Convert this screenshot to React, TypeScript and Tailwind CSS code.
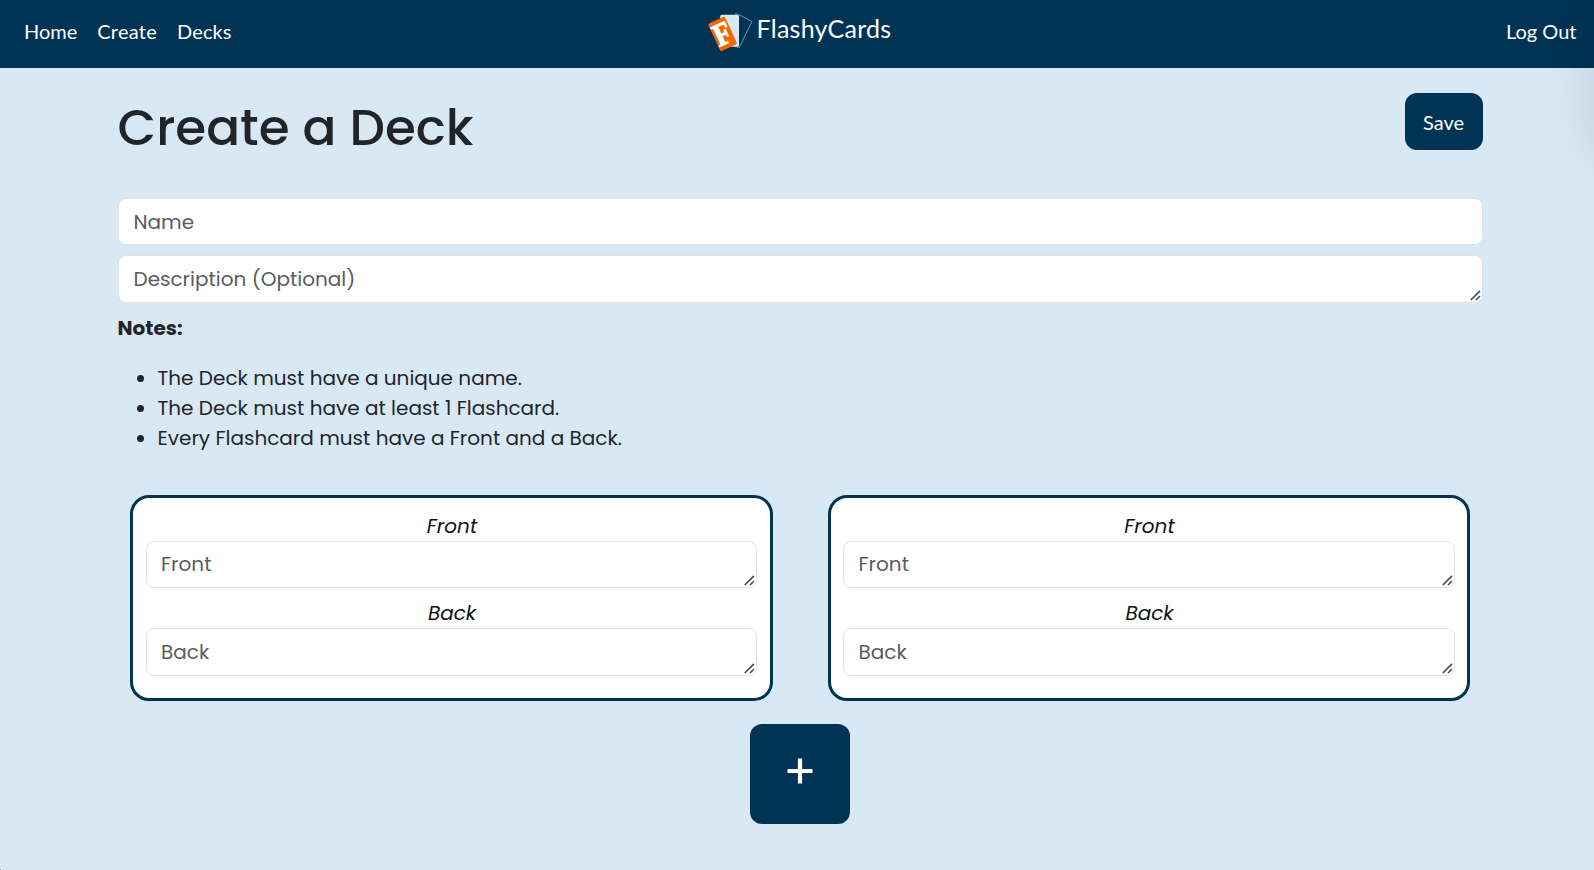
import React from "react";

const NAV_LINKS = [
  { label: "Home", className: "" },
  { label: "Create", className: "tracking-[0.25px]" },
  { label: "Decks", className: "tracking-[0.1px]" },
];

const NOTES = [
  "The Deck must have a unique name.",
  "The Deck must have at least 1 Flashcard.",
  "Every Flashcard must have a Front and a Back.",
];

function Logo() {
  return (
    <svg className="block h-[40px] w-[46px]" viewBox="0 0 46 40" aria-hidden="true">
      <path d="M28 1.9 L30.4 1.9 L45 9.5 L32 36 L27 33.4" fill="none" stroke="#8fa7b8" strokeWidth="0.8" strokeLinejoin="round" />
      <rect x="13.2" y="2.8" width="18.8" height="32" rx="1.6" fill="#d9e8f5" />
      <g transform="translate(15.6 21.9) rotate(-25)">
        <rect x="-9.2" y="-15.2" width="18.4" height="30.4" rx="1.8" fill="#f56600" />
        <text
          x="0"
          y="10.6"
          textAnchor="middle"
          stroke="#fff"
          strokeWidth="1.1"
          transform="scale(0.86 1)"
          className="fill-white font-['Liberation_Serif',serif] text-[32px] font-bold"
        >
          F
        </text>
      </g>
    </svg>
  );
}

function ResizeGrip() {
  return (
    <svg
      className="pointer-events-none absolute right-[2px] bottom-[2px] h-[11px] w-[11px]"
      viewBox="0 0 11 11"
      aria-hidden="true"
    >
      <path d="M0.8 10 L10 0.8 M6 10 L10 6" stroke="#4a4c4e" strokeWidth="1.7" fill="none" />
    </svg>
  );
}

const FIELD =
  "block w-full resize-none overflow-hidden rounded-[8px] border border-[#dee2e6] bg-white pr-[15px] pl-[14.5px] text-[20px] leading-[30px] placeholder:text-[#595c5f] placeholder:opacity-100 outline-none";

function Area({ placeholder, className }: { placeholder: string; className: string }) {
  return (
    <div className="relative">
      <textarea rows={1} placeholder={placeholder} className={`${FIELD} ${className}`} />
      <ResizeGrip />
    </div>
  );
}

function FlashCard() {
  return (
    <div className="h-[206px] w-[642.5px] rounded-[19px] border-3 border-[#003354] bg-white px-[12.5px] pt-[13px]">
      <div className="pl-[1.5px] text-center leading-[30px] text-[#101214] italic">Front</div>
      <Area placeholder="Front" className="h-[47px] pt-[7px]" />
      <div className="mt-[10px] pl-[1.5px] text-center leading-[30px] text-[#101214] italic">Back</div>
      <Area placeholder="Back" className="h-[48px] pt-[8px]" />
    </div>
  );
}

export default function App() {
  return (
    <div className="relative h-[870px] w-full overflow-hidden bg-[#d9e8f5] font-['Poppins',sans-serif] text-[20px] text-[#212529]">
      <nav className="grid h-[68px] grid-cols-[1fr_auto_1fr] items-start bg-[#003354] pr-[18px] pl-[24px] font-['Lato',sans-serif] text-white">
        <div className="flex gap-[20px] pt-[16px] leading-[30px]">
          {NAV_LINKS.map((link) => (
            <a key={link.label} href="#" className={link.className}>
              {link.label}
            </a>
          ))}
        </div>
        <a href="#" className="mr-[2px] flex items-start gap-[4px] pt-[12px] text-[25px] leading-[32px] tracking-[0.25px]">
          <Logo />
          <span>FlashyCards</span>
        </a>
        <a href="#" className="-mr-[0.5px] justify-self-end pt-[16px] leading-[30px]">
          Log Out
        </a>
      </nav>

      <main className="ml-[118px] w-[1365px]">
        <header className="flex h-[130px] items-start justify-between pt-[25px]">
          <h1 className="-ml-[0.5px] pt-[5px] text-[50px] leading-[60px] font-medium">Create a Deck</h1>
          <button className="h-[57px] w-[78px] rounded-[12px] bg-[#003354] pr-[1px] font-['Lato',sans-serif] text-[20px] text-white">
            Save
          </button>
        </header>

        <div className="flex flex-col gap-[10px]">
          <input placeholder="Name" className={`${FIELD} h-[47px] pt-[1px]`} />
          <Area placeholder="Description (Optional)" className="h-[48px] pt-[8px]" />
        </div>

        <p className="mt-[10px] -ml-[0.5px] leading-[30px] font-bold">Notes:</p>
        <ul className="mt-[20px] leading-[30px]">
          {NOTES.map((note) => (
            <li key={note} className="flex items-center">
              <span className="mr-[13.5px] ml-[19px] size-[7px] rounded-full bg-[#212529]" />
              {note}
            </li>
          ))}
        </ul>

        <section className="mt-[42px] flex justify-between pr-[13px] pl-[12px]">
          <FlashCard />
          <FlashCard />
        </section>

        <button
          aria-label="Add flashcard"
          className="mt-[23px] ml-[632px] flex size-[100px] items-center justify-center rounded-[12px] bg-[#003354]"
        >
          <svg className="-mt-[6px] size-[26px]" viewBox="0 0 26 26" aria-hidden="true">
            <path d="M13 0.5 V25.5 M0.5 13 H25.5" stroke="#fff" strokeWidth="4.2" />
          </svg>
        </button>
      </main>

      <div className="pointer-events-none absolute top-[30px] -right-[64px] h-[120px] w-[60px] rounded-[12px] shadow-[0_0_52px_4px_rgba(0,0,0,0.12)]" />
      <div className="absolute bottom-0 left-0 size-px bg-[#8f9aa3]" />
    </div>
  );
}
